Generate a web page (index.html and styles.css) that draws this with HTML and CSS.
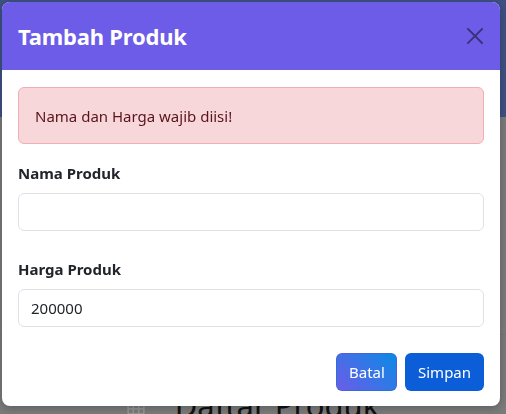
FILE: index.html
```html
<!DOCTYPE html>
<html lang="id">
<head>
<meta charset="utf-8">
<title>Tambah Produk</title>
<link rel="stylesheet" href="styles.css">
</head>
<body>
<div class="page">
  <div class="navbar"></div>
  <div class="content">
    <div class="band"></div>
    <h1 class="page-title">
      <svg class="grid-icon" width="18" height="18" viewBox="0 0 16 16" fill="none" stroke="#9a9a9a" stroke-width="1.2">
        <rect x="1" y="1" width="14" height="14" rx="1"/>
        <path d="M1 5.5h14M1 10.5h14M5.5 1v14M10.5 1v14"/>
      </svg>
      <span>Daftar Produk</span>
    </h1>
  </div>
</div>

<div class="modal">
  <div class="modal-content">
    <div class="modal-header">
      <h5 class="modal-title">Tambah Produk</h5>
      <button class="btn-close" type="button" aria-label="Close">
        <svg width="18" height="18" viewBox="0 0 18 18" fill="none" stroke="#3a3178" stroke-width="1.8" stroke-linecap="square">
          <path d="M2 2L16 16M16 2L2 16"/>
        </svg>
      </button>
    </div>
    <div class="modal-body">
      <div class="alert">Nama dan Harga wajib diisi!</div>
      <div class="field">
        <label class="form-label">Nama Produk</label>
        <div class="form-control"></div>
      </div>
      <div class="field">
        <label class="form-label">Harga Produk</label>
        <div class="form-control">200000</div>
      </div>
    </div>
    <div class="modal-footer">
      <button class="btn btn-batal" type="button">Batal</button>
      <button class="btn btn-simpan" type="button">Simpan</button>
    </div>
  </div>
</div>
</body>
</html>
```

FILE: styles.css
```css
* { box-sizing: border-box; }

html, body {
  margin: 0;
  padding: 0;
  height: 100%;
  overflow: hidden;
}

body {
  font-family: "Noto Sans", "Open Sans", sans-serif;
  color: #212529;
  background: #7b7b7b;
}

.page {
  display: flex;
  flex-direction: column;
  height: 100%;
}

.navbar {
  height: 117px;
  background: #3f5183;
  flex: none;
}

.content {
  flex: 1;
  background: #7b7b7b;
  display: flex;
  flex-direction: column;
}

.band {
  height: 218px;
  border-bottom: 1px solid #757575;
  flex: none;
}

.page-title {
  margin: 52px 0 0;
  display: flex;
  align-items: center;
  justify-content: center;
  gap: 30px;
  font-size: 31px;
  font-weight: 400;
  line-height: 1.2;
  color: #111;
}

.grid-icon { flex: none; }

.modal {
  position: fixed;
  inset: 0;
  padding: 2px 6px 0 2px;
}

.modal-content {
  width: 498px;
  height: 404px;
  background: #fff;
  border-radius: 8px;
  overflow: hidden;
  display: flex;
  flex-direction: column;
  box-shadow: 0 2px 8px rgba(0,0,0,.25);
}

.modal-header {
  height: 68px;
  background: #6c5ce7;
  display: flex;
  align-items: center;
  justify-content: space-between;
  padding: 0 16px;
  flex: none;
}

.modal-title {
  margin: 0;
  color: #fff;
  font-size: 22px;
  font-weight: 700;
  line-height: 1.2;
  letter-spacing: -0.2px;
}

.btn-close {
  border: 0;
  background: none;
  padding: 0;
  width: 18px;
  height: 18px;
  display: flex;
}

.modal-body {
  padding: 17px 16px 0;
  flex: 1;
  min-height: 0;
}

.alert {
  height: 57px;
  display: flex;
  align-items: center;
  padding: 0 16px;
  background: #f8d7da;
  border: 1px solid #f1aeb5;
  border-radius: 6px;
  color: #58151c;
  font-size: 15px;
  margin-bottom: 17px;
}

.field {
  display: flex;
  flex-direction: column;
  margin-bottom: 26px;
}

.field:last-child { margin-bottom: 0; }

.form-label {
  font-size: 15px;
  font-weight: 700;
  line-height: 24px;
  margin-bottom: 8px;
  color: #212529;
}

.form-control {
  height: 38px;
  border: 1px solid #dee2e6;
  border-radius: 6px;
  padding: 0 12px;
  font-size: 15px;
  display: flex;
  align-items: center;
  color: #212529;
}

.modal-footer {
  display: flex;
  justify-content: flex-end;
  gap: 8px;
  padding: 0 16px 15px;
  flex: none;
}

.btn {
  height: 38px;
  border-radius: 6px;
  border: 1px solid transparent;
  color: #fff;
  font-family: inherit;
  font-size: 15px;
  padding: 0 12px;
}

.btn-batal {
  width: 61px;
  background: linear-gradient(45deg, #6c5ce7, #0a8ae4);
  border-color: rgba(60, 90, 200, .4);
}

.btn-simpan {
  width: 79px;
  background: #0b5ed7;
}
```
